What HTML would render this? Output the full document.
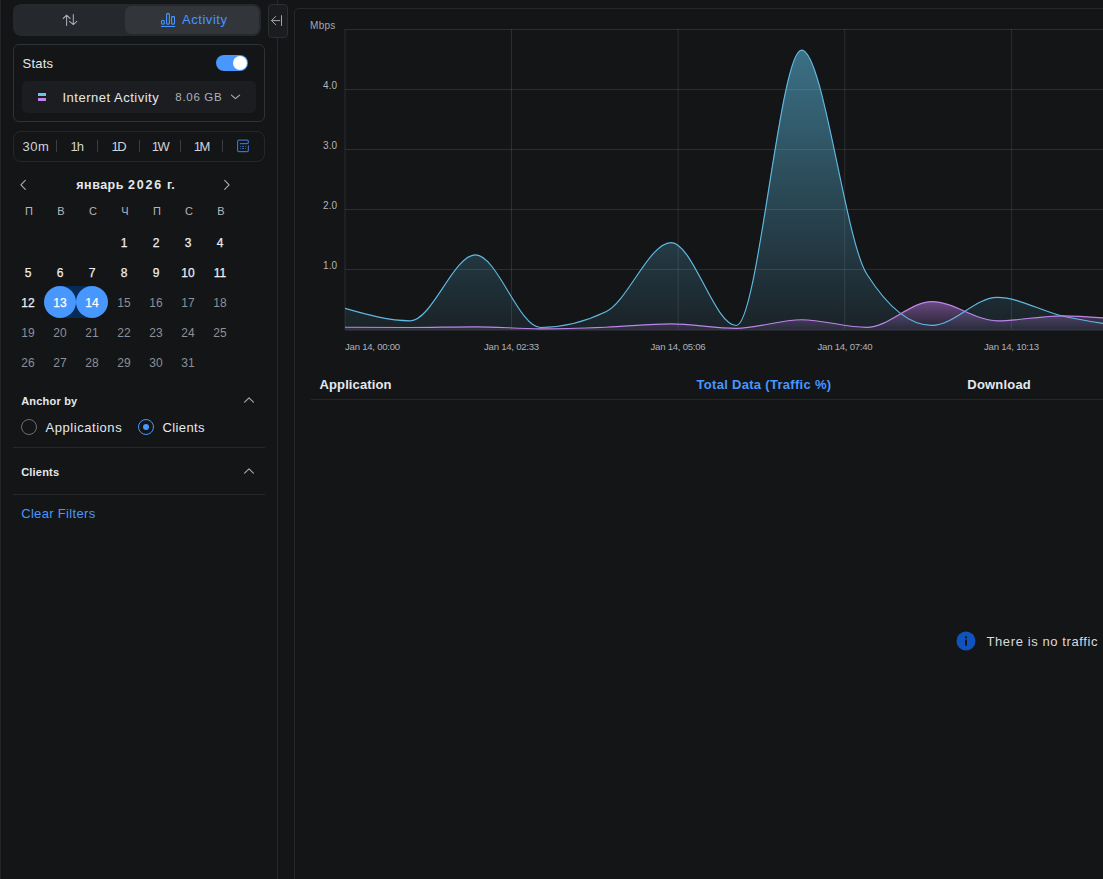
<!DOCTYPE html>
<html><head><meta charset="utf-8">
<style>
*{box-sizing:border-box;margin:0;padding:0}
html,body{width:1103px;height:879px;overflow:hidden;background:#141517;font-family:"Liberation Sans",sans-serif;color:#e6e8eb}
.a{position:absolute;white-space:nowrap;line-height:1}
</style></head><body>
<div class="a" style="left:277px;top:0px;width:1px;height:879px;background:#27282b"></div>
<div class="a" style="left:0px;top:0px;width:1px;height:879px;background:#222427"></div>
<div class="a" style="left:13px;top:4px;width:248px;height:32px;background:#25282c;border-radius:8px"></div>
<div class="a" style="left:125px;top:6px;width:134px;height:28px;background:#32353a;border-radius:6px"></div>
<svg class="a" style="left:55px;top:8px" width="30" height="24" viewBox="0 0 30 24" fill="none" stroke="#a9adb3" stroke-width="1.05" stroke-linecap="round" stroke-linejoin="round">
  <path d="M11.6 17.5V7.4M8.2 10.5L11.6 7.2L15.1 10.5"/>
  <path d="M18.3 6.4V16.4M14.5 13.4L18.3 16.6L21.8 13.4"/>
</svg>
<svg class="a" style="left:155px;top:8px" width="30" height="24" viewBox="0 0 30 24" fill="none" stroke="#4797ff" stroke-width="1.1">
  <rect x="6.55" y="12.55" width="2.75" height="3.55" rx="0.9"/>
  <rect x="11.6" y="5.6" width="2.8" height="10.5" rx="0.9"/>
  <rect x="16.6" y="8.6" width="2.9" height="7.5" rx="0.9"/>
  <path d="M6.4 18.55H19.7" stroke-linecap="round"/>
</svg>
<div class="a" style="left:182.00px;top:12.90px;font-size:13px;color:#4797ff;letter-spacing:0.55px">Activity</div>
<div class="a" style="left:268px;top:4px;width:20px;height:34px;background:#1b1c1f;border:1px solid #2c2e32;border-radius:4px"></div>
<svg class="a" style="left:264px;top:2px" width="30" height="38" viewBox="0 0 30 38" fill="none" stroke="#a2a6ac" stroke-width="1" stroke-linecap="round" stroke-linejoin="round">
  <path d="M17.5 13.7V23.5M7.6 18.6H15.8M11.7 14.4L7.6 18.6L11.7 22.8"/>
</svg>
<div class="a" style="left:13px;top:44px;width:252px;height:77.5px;border:1px solid #2e3135;border-radius:6px"></div>
<div class="a" style="left:22.50px;top:57.00px;font-size:13px;color:#e6e8eb;letter-spacing:0.25px">Stats</div>
<div class="a" style="left:216px;top:55px;width:32px;height:16px;background:#4797ff;border-radius:8px"></div>
<div class="a" style="left:233px;top:56px;width:14px;height:14px;background:#fff;border-radius:50%"></div>
<div class="a" style="left:22px;top:81px;width:234px;height:31.5px;background:#1c1d20;border-radius:5px"></div>
<div class="a" style="left:38px;top:93px;width:8px;height:3px;background:#64c6ee"></div>
<div class="a" style="left:38px;top:98px;width:8px;height:3px;background:#c283ea"></div>
<div class="a" style="left:62.50px;top:91.20px;font-size:13px;color:#e6e8eb;letter-spacing:0.5px">Internet Activity</div>
<div class="a" style="left:175.30px;top:91.57px;font-size:11.5px;color:#aeb1b6;letter-spacing:0.7px">8.06 GB</div>
<svg class="a" style="left:228px;top:90px" width="16" height="14" viewBox="0 0 16 14" fill="none" stroke="#a9adb3" stroke-width="1.2" stroke-linecap="round" stroke-linejoin="round"><path d="M3.4 5.1L7.5 8.6L11.6 5.1"/></svg>
<div class="a" style="left:13px;top:130.5px;width:252px;height:31px;border:1px solid #25272b;border-radius:8px"></div>
<div class="a" style="left:22.50px;top:139.80px;font-size:13px;color:#d0d3d7;letter-spacing:0.5px">30m</div>
<div class="a" style="left:70.50px;top:139.80px;font-size:13px;color:#d0d3d7;letter-spacing:-1px">1h</div>
<div class="a" style="left:111.60px;top:139.80px;font-size:13px;color:#d0d3d7;letter-spacing:-1.6px">1D</div>
<div class="a" style="left:151.80px;top:139.80px;font-size:13px;color:#d0d3d7;letter-spacing:-1.6px">1W</div>
<div class="a" style="left:193.80px;top:139.80px;font-size:13px;color:#d0d3d7;letter-spacing:-1.6px">1M</div>
<div class="a" style="left:56px;top:140px;width:1px;height:12px;background:#3a3d42"></div>
<div class="a" style="left:97px;top:140px;width:1px;height:12px;background:#3a3d42"></div>
<div class="a" style="left:139px;top:140px;width:1px;height:12px;background:#3a3d42"></div>
<div class="a" style="left:180px;top:140px;width:1px;height:12px;background:#3a3d42"></div>
<div class="a" style="left:222px;top:140px;width:1px;height:12px;background:#3a3d42"></div>
<svg class="a" style="left:232px;top:136px" width="22" height="20" viewBox="0 0 22 20" fill="none" stroke="#3a6fc2" stroke-width="1.2" stroke-linecap="round">
 <path d="M16.4 9.8V14.3Q16.4 15.6 15.1 15.6H6.9Q5.6 15.6 5.6 14.3V5.5Q5.6 4.2 6.9 4.2H15.1Q16.4 4.2 16.4 5.5V6.3Q16.4 7.7 15 7.7H8.4"/>
</svg>
<div class="a" style="left:239.8px;top:145.8px;width:1.3px;height:1.2px;background:#3a6fc2;border-radius:0.5px"></div>
<div class="a" style="left:242.1px;top:145.9px;width:1.6px;height:1.2px;background:#3a6fc2;border-radius:0.5px"></div>
<div class="a" style="left:244.9px;top:145.8px;width:1.3px;height:1.2px;background:#3a6fc2;border-radius:0.5px"></div>
<div class="a" style="left:239.8px;top:147.9px;width:1.3px;height:1.2px;background:#3a6fc2;border-radius:0.5px"></div>
<div class="a" style="left:242.1px;top:148.0px;width:1.6px;height:1.2px;background:#3a6fc2;border-radius:0.5px"></div>
<div class="a" style="left:244.9px;top:147.9px;width:1.3px;height:1.2px;background:#3a6fc2;border-radius:0.5px"></div>
<svg class="a" style="left:16px;top:178px" width="14" height="14" viewBox="0 0 14 14" fill="none" stroke="#a9adb3" stroke-width="1.15" stroke-linecap="round" stroke-linejoin="round"><path d="M9.3 2.4L4.9 6.9L9.3 11.4"/></svg>
<svg class="a" style="left:220px;top:178px" width="14" height="14" viewBox="0 0 14 14" fill="none" stroke="#a9adb3" stroke-width="1.15" stroke-linecap="round" stroke-linejoin="round"><path d="M4.7 2.4L9.1 6.9L4.7 11.4"/></svg>
<div class="a" style="left:76.30px;top:178.92px;font-size:12.5px;color:#e6e8eb;font-weight:bold;letter-spacing:0.5px">январь <span style="letter-spacing:1.8px">2026</span> г.</div>
<div class="a" style="left:13.00px;top:205.69px;font-size:11px;color:#b4b7bc;text-align:center;width:32px">П</div>
<div class="a" style="left:45.00px;top:205.69px;font-size:11px;color:#b4b7bc;text-align:center;width:32px">В</div>
<div class="a" style="left:77.00px;top:205.69px;font-size:11px;color:#b4b7bc;text-align:center;width:32px">С</div>
<div class="a" style="left:109.00px;top:205.69px;font-size:11px;color:#b4b7bc;text-align:center;width:32px">Ч</div>
<div class="a" style="left:141.00px;top:205.69px;font-size:11px;color:#b4b7bc;text-align:center;width:32px">П</div>
<div class="a" style="left:173.00px;top:205.69px;font-size:11px;color:#b4b7bc;text-align:center;width:32px">С</div>
<div class="a" style="left:205.00px;top:205.69px;font-size:11px;color:#b4b7bc;text-align:center;width:32px">В</div>
<div class="a" style="left:60px;top:286px;width:32px;height:32px;background:#072a57"></div>
<div class="a" style="left:44px;top:286px;width:32px;height:32px;background:#4797ff;border-radius:50%"></div>
<div class="a" style="left:76px;top:286px;width:32px;height:32px;background:#4797ff;border-radius:50%"></div>
<div class="a" style="left:108.00px;top:236.84px;font-size:12px;color:#eceef0;text-align:center;width:32px;-webkit-text-stroke:0.25px #eceef0">1</div>
<div class="a" style="left:140.00px;top:236.84px;font-size:12px;color:#eceef0;text-align:center;width:32px;-webkit-text-stroke:0.25px #eceef0">2</div>
<div class="a" style="left:172.00px;top:236.84px;font-size:12px;color:#eceef0;text-align:center;width:32px;-webkit-text-stroke:0.25px #eceef0">3</div>
<div class="a" style="left:204.00px;top:236.84px;font-size:12px;color:#eceef0;text-align:center;width:32px;-webkit-text-stroke:0.25px #eceef0">4</div>
<div class="a" style="left:12.00px;top:266.84px;font-size:12px;color:#eceef0;text-align:center;width:32px;-webkit-text-stroke:0.25px #eceef0">5</div>
<div class="a" style="left:44.00px;top:266.84px;font-size:12px;color:#eceef0;text-align:center;width:32px;-webkit-text-stroke:0.25px #eceef0">6</div>
<div class="a" style="left:76.00px;top:266.84px;font-size:12px;color:#eceef0;text-align:center;width:32px;-webkit-text-stroke:0.25px #eceef0">7</div>
<div class="a" style="left:108.00px;top:266.84px;font-size:12px;color:#eceef0;text-align:center;width:32px;-webkit-text-stroke:0.25px #eceef0">8</div>
<div class="a" style="left:140.00px;top:266.84px;font-size:12px;color:#eceef0;text-align:center;width:32px;-webkit-text-stroke:0.25px #eceef0">9</div>
<div class="a" style="left:172.00px;top:266.84px;font-size:12px;color:#eceef0;text-align:center;width:32px;-webkit-text-stroke:0.25px #eceef0">10</div>
<div class="a" style="left:204.00px;top:266.84px;font-size:12px;color:#eceef0;text-align:center;width:32px;-webkit-text-stroke:0.25px #eceef0">11</div>
<div class="a" style="left:12.00px;top:296.84px;font-size:12px;color:#eceef0;text-align:center;width:32px;-webkit-text-stroke:0.25px #eceef0">12</div>
<div class="a" style="left:44.00px;top:296.84px;font-size:12px;color:#ffffff;text-align:center;width:32px;-webkit-text-stroke:0.25px #ffffff">13</div>
<div class="a" style="left:76.00px;top:296.84px;font-size:12px;color:#ffffff;text-align:center;width:32px;-webkit-text-stroke:0.25px #ffffff">14</div>
<div class="a" style="left:108.00px;top:296.84px;font-size:12px;color:#8d9096;text-align:center;width:32px">15</div>
<div class="a" style="left:140.00px;top:296.84px;font-size:12px;color:#8d9096;text-align:center;width:32px">16</div>
<div class="a" style="left:172.00px;top:296.84px;font-size:12px;color:#8d9096;text-align:center;width:32px">17</div>
<div class="a" style="left:204.00px;top:296.84px;font-size:12px;color:#8d9096;text-align:center;width:32px">18</div>
<div class="a" style="left:12.00px;top:326.84px;font-size:12px;color:#8d9096;text-align:center;width:32px">19</div>
<div class="a" style="left:44.00px;top:326.84px;font-size:12px;color:#8d9096;text-align:center;width:32px">20</div>
<div class="a" style="left:76.00px;top:326.84px;font-size:12px;color:#8d9096;text-align:center;width:32px">21</div>
<div class="a" style="left:108.00px;top:326.84px;font-size:12px;color:#8d9096;text-align:center;width:32px">22</div>
<div class="a" style="left:140.00px;top:326.84px;font-size:12px;color:#8d9096;text-align:center;width:32px">23</div>
<div class="a" style="left:172.00px;top:326.84px;font-size:12px;color:#8d9096;text-align:center;width:32px">24</div>
<div class="a" style="left:204.00px;top:326.84px;font-size:12px;color:#8d9096;text-align:center;width:32px">25</div>
<div class="a" style="left:12.00px;top:356.84px;font-size:12px;color:#8d9096;text-align:center;width:32px">26</div>
<div class="a" style="left:44.00px;top:356.84px;font-size:12px;color:#8d9096;text-align:center;width:32px">27</div>
<div class="a" style="left:76.00px;top:356.84px;font-size:12px;color:#8d9096;text-align:center;width:32px">28</div>
<div class="a" style="left:108.00px;top:356.84px;font-size:12px;color:#8d9096;text-align:center;width:32px">29</div>
<div class="a" style="left:140.00px;top:356.84px;font-size:12px;color:#8d9096;text-align:center;width:32px">30</div>
<div class="a" style="left:172.00px;top:356.84px;font-size:12px;color:#8d9096;text-align:center;width:32px">31</div>
<div class="a" style="left:21.20px;top:395.99px;font-size:11px;color:#e6e8eb;font-weight:bold;letter-spacing:0.2px">Anchor by</div>
<svg class="a" style="left:242px;top:393px" width="14" height="14" viewBox="0 0 14 14" fill="none" stroke="#a3a7ad" stroke-width="1.15" stroke-linecap="round" stroke-linejoin="round"><path d="M2.6 9.2L7 4.8L11.4 9.2"/></svg>
<div class="a" style="left:21px;top:419px;width:16px;height:16px;border-radius:50%;border:1px solid #6b6e73"></div>
<div class="a" style="left:45.50px;top:421.00px;font-size:13px;color:#e6e8eb;letter-spacing:0.55px">Applications</div>
<div class="a" style="left:138px;top:419px;width:16px;height:16px;border-radius:50%;border:1px solid #4797ff"></div>
<div class="a" style="left:143px;top:424px;width:6px;height:6px;background:#4797ff;border-radius:50%"></div>
<div class="a" style="left:162.40px;top:421.00px;font-size:13px;color:#e6e8eb;letter-spacing:0.4px">Clients</div>
<div class="a" style="left:13px;top:447px;width:252px;height:1px;background:#27282b"></div>
<div class="a" style="left:21.20px;top:466.69px;font-size:11px;color:#e6e8eb;font-weight:bold;letter-spacing:0.2px">Clients</div>
<svg class="a" style="left:242px;top:464px" width="14" height="14" viewBox="0 0 14 14" fill="none" stroke="#a3a7ad" stroke-width="1.15" stroke-linecap="round" stroke-linejoin="round"><path d="M2.6 9.2L7 4.8L11.4 9.2"/></svg>
<div class="a" style="left:13px;top:494px;width:252px;height:1px;background:#27282b"></div>
<div class="a" style="left:21.20px;top:506.80px;font-size:13px;color:#4797ff;letter-spacing:0.33px">Clear Filters</div>
<div class="a" style="left:294px;top:8px;width:900px;height:900px;border:1px solid #27282b;border-radius:5px"></div>
<svg class="a" style="left:0;top:0" width="1103" height="879" viewBox="0 0 1103 879">
<defs>
<linearGradient id="gc" x1="0" y1="0" x2="0" y2="1"><stop offset="0" stop-color="#5bbbe0" stop-opacity="0.55"/><stop offset="1" stop-color="#5bbbe0" stop-opacity="0.08"/></linearGradient>
<linearGradient id="gp" x1="0" y1="0" x2="0" y2="1"><stop offset="0" stop-color="#c080f0" stop-opacity="0.5"/><stop offset="1" stop-color="#c080f0" stop-opacity="0.08"/></linearGradient>
<clipPath id="cp"><rect x="345" y="0" width="800" height="330.5"/></clipPath>
</defs>
<g clip-path="url(#cp)">
<path d="M345.00,308.40C366.74,314.60 388.48,320.80 410.22,320.80C431.96,320.80 453.70,254.90 475.44,254.90C497.18,254.90 518.92,327.50 540.66,327.50C562.40,327.50 584.14,322.27 605.88,311.80C627.62,301.33 649.36,242.60 671.10,242.60C692.84,242.60 714.58,325.50 736.32,325.50C758.06,325.50 779.80,50.10 801.54,50.10C823.28,50.10 845.02,239.73 866.76,274.00C888.50,308.27 910.24,325.40 931.98,325.40C953.72,325.40 975.46,297.40 997.20,297.40C1018.94,297.40 1040.68,311.07 1062.42,316.00C1084.16,320.93 1105.90,323.97 1127.64,327.00L1127.64,330.5L345.00,330.5Z" fill="url(#gc)"/>
<path d="M345.00,327.20C366.74,327.35 388.48,327.50 410.22,327.50C431.96,327.50 453.70,326.80 475.44,326.80C497.18,326.80 518.92,328.80 540.66,328.80C562.40,328.80 584.14,328.02 605.88,327.20C627.62,326.38 649.36,323.90 671.10,323.90C692.84,323.90 714.58,328.30 736.32,328.30C758.06,328.30 779.80,319.70 801.54,319.70C823.28,319.70 845.02,327.40 866.76,327.40C888.50,327.40 910.24,301.60 931.98,301.60C953.72,301.60 975.46,320.80 997.20,320.80C1018.94,320.80 1040.68,315.80 1062.42,315.80C1084.16,315.80 1105.90,317.90 1127.64,320.00L1127.64,330.5L345.00,330.5Z" fill="url(#gp)"/>
</g>
<g opacity="0.12"><path d="M345,29.5H1103 M345,89.5H1103 M345,149.5H1103 M345,209.5H1103 M345,269.5H1103 M511.5,29V329.5 M678.1,29V329.5 M844.7,29V329.5 M1011.4,29V329.5 M345,29V329.5 M345,330H1103" stroke="#d0dcf0" stroke-width="1" fill="none"/></g>
<g clip-path="url(#cp)">
<path d="M345.00,308.40C366.74,314.60 388.48,320.80 410.22,320.80C431.96,320.80 453.70,254.90 475.44,254.90C497.18,254.90 518.92,327.50 540.66,327.50C562.40,327.50 584.14,322.27 605.88,311.80C627.62,301.33 649.36,242.60 671.10,242.60C692.84,242.60 714.58,325.50 736.32,325.50C758.06,325.50 779.80,50.10 801.54,50.10C823.28,50.10 845.02,239.73 866.76,274.00C888.50,308.27 910.24,325.40 931.98,325.40C953.72,325.40 975.46,297.40 997.20,297.40C1018.94,297.40 1040.68,311.07 1062.42,316.00C1084.16,320.93 1105.90,323.97 1127.64,327.00" stroke="#60b9e2" stroke-width="1.15" fill="none"/>
<path d="M345.00,327.20C366.74,327.35 388.48,327.50 410.22,327.50C431.96,327.50 453.70,326.80 475.44,326.80C497.18,326.80 518.92,328.80 540.66,328.80C562.40,328.80 584.14,328.02 605.88,327.20C627.62,326.38 649.36,323.90 671.10,323.90C692.84,323.90 714.58,328.30 736.32,328.30C758.06,328.30 779.80,319.70 801.54,319.70C823.28,319.70 845.02,327.40 866.76,327.40C888.50,327.40 910.24,301.60 931.98,301.60C953.72,301.60 975.46,320.80 997.20,320.80C1018.94,320.80 1040.68,315.80 1062.42,315.80C1084.16,315.80 1105.90,317.90 1127.64,320.00" stroke="#bd85ea" stroke-width="1.15" fill="none"/>
</g></svg>
<div class="a" style="left:310.00px;top:20.54px;font-size:10px;color:#a3a7ad;letter-spacing:0.3px">Mbps</div>
<div class="a" style="left:296.00px;top:80.73px;font-size:10px;color:#b0b4ba;letter-spacing:0.15px;text-align:right;width:41.3px">4.0</div>
<div class="a" style="left:296.00px;top:140.73px;font-size:10px;color:#b0b4ba;letter-spacing:0.15px;text-align:right;width:41.3px">3.0</div>
<div class="a" style="left:296.00px;top:200.73px;font-size:10px;color:#b0b4ba;letter-spacing:0.15px;text-align:right;width:41.3px">2.0</div>
<div class="a" style="left:296.00px;top:260.74px;font-size:10px;color:#b0b4ba;letter-spacing:0.15px;text-align:right;width:41.3px">1.0</div>
<div class="a" style="left:345.00px;top:341.87px;font-size:9.6px;color:#aeb2b8;letter-spacing:-0.25px">Jan 14, 00:00</div>
<div class="a" style="left:461.50px;top:341.87px;font-size:9.6px;color:#aeb2b8;letter-spacing:-0.25px;text-align:center;width:100px">Jan 14, 02:33</div>
<div class="a" style="left:628.00px;top:341.87px;font-size:9.6px;color:#aeb2b8;letter-spacing:-0.25px;text-align:center;width:100px">Jan 14, 05:06</div>
<div class="a" style="left:795.00px;top:341.87px;font-size:9.6px;color:#aeb2b8;letter-spacing:-0.25px;text-align:center;width:100px">Jan 14, 07:40</div>
<div class="a" style="left:961.50px;top:341.87px;font-size:9.6px;color:#aeb2b8;letter-spacing:-0.25px;text-align:center;width:100px">Jan 14, 10:13</div>
<div class="a" style="left:319.50px;top:378.10px;font-size:13px;color:#e6e8eb;font-weight:bold;letter-spacing:0.12px">Application</div>
<div class="a" style="left:696.50px;top:378.20px;font-size:13px;color:#4797ff;font-weight:bold;letter-spacing:0.3px">Total Data (Traffic %)</div>
<div class="a" style="left:967.30px;top:377.90px;font-size:13px;color:#e6e8eb;font-weight:bold;letter-spacing:0.2px">Download</div>
<div class="a" style="left:311px;top:399px;width:800px;height:1px;background:#27282b"></div>
<svg class="a" style="left:956px;top:631px" width="20" height="20" viewBox="0 0 20 20">
  <circle cx="10" cy="10" r="9.5" fill="#1153bd"/>
  <rect x="9" y="8.7" width="2" height="6" fill="#141517"/>
  <rect x="9" y="5.3" width="2" height="2" fill="#141517"/>
</svg>
<div class="a" style="left:986.50px;top:634.80px;font-size:13px;color:#d9dbde;letter-spacing:0.6px">There is no traffic</div>
</body></html>
